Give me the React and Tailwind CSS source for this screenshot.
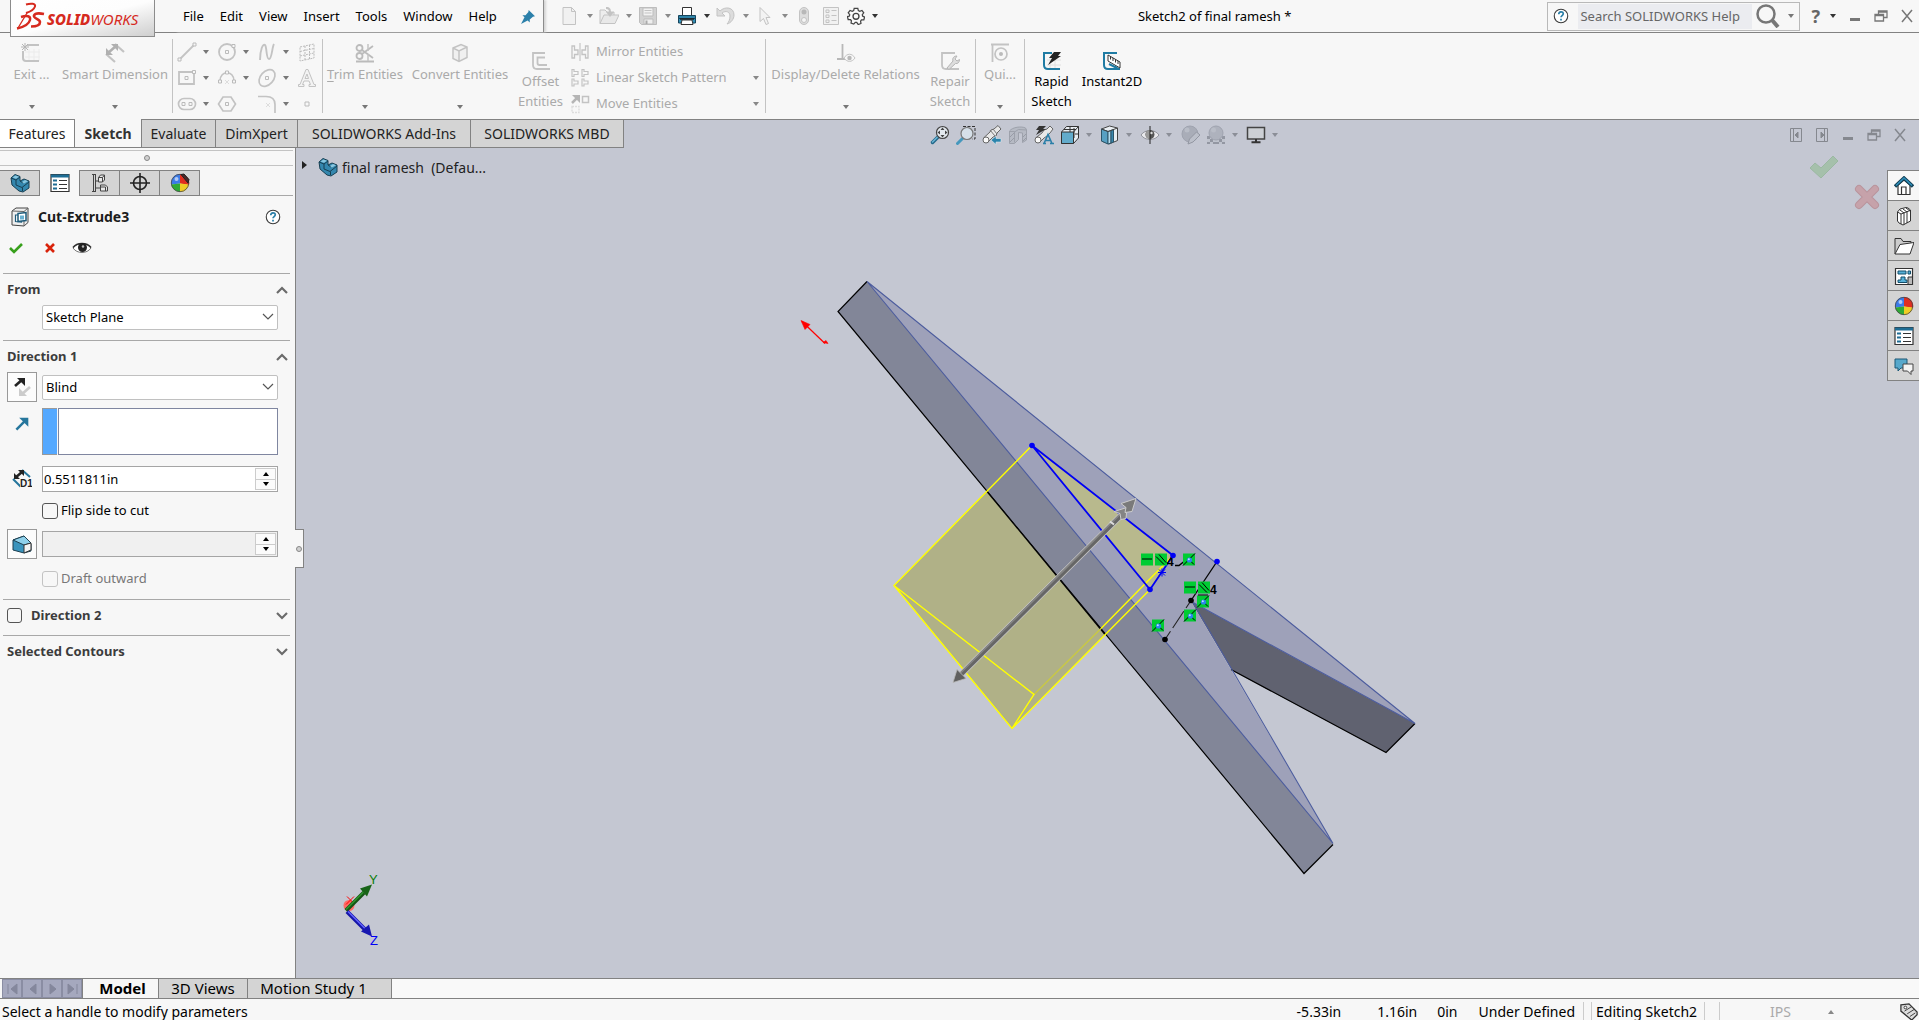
import { useState } from 'react';

const Icon = ({ size = 20, children, className = '' }) => (
  <svg width={size} height={size} viewBox="0 0 20 20" fill="none" className={`shrink-0 ${className}`} aria-hidden="true">
    {children}
  </svg>
);

const Caret = ({ className = 'text-[#777]' }) => (
  <svg width="6" height="4" viewBox="0 0 6 4" className={`shrink-0 ${className}`} aria-hidden="true">
    <path d="M0 0h6L3 4z" fill="currentColor" />
  </svg>
);

const Chevron = ({ up, thin }) => (
  <svg width="12" height="8" viewBox="0 0 12 8" fill="none" className="shrink-0" aria-hidden="true">
    <path d={up ? 'M1 7l5-5 5 5' : 'M1 1l5 5 5-5'} stroke={thin ? '#555' : '#6b6b6b'} strokeWidth={thin ? 1.2 : 2.2} />
  </svg>
);

const G = '#c3c3c3';

/* Title bar icons */
const NewIcon = () => (
  <Icon><path d="M3 1.500h8.500l4 4v13H3z" fill="#f1f1f1" stroke={G} /><path d="M11.500 1.500v4h4" stroke={G} /></Icon>
);
const OpenIcon = () => (
  <Icon>
    <path d="M1 17.500V4h5l2 2h7v3" fill="#ededed" stroke={G} />
    <path d="M1 17.500L5 9h15l-4 8.500z" fill="#e8e8e8" stroke={G} />
    <path d="M7 1c4 0 5 2 5 5h3l-4 5-4-5h3c0-2-1-3-3-3z" fill={G} />
  </Icon>
);
const SaveIcon = () => (
  <Icon>
    <path d="M1.500 1.500h17v17h-15l-2-2z" fill="#d2d2d2" stroke="#bdbdbd" />
    <path d="M5 2h10v8H5z" fill="#f2f2f2" stroke="#bdbdbd" /><path d="M6.500 4.500h7M6.500 7h7" stroke={G} />
    <path d="M6 13h9v5H6z" fill="#eee" stroke="#bdbdbd" /><path d="M7.500 14.500h2V18h-2z" fill="#aaa" />
  </Icon>
);
const PrintIcon = () => (
  <Icon>
    <path d="M5.500 9V1.500h9V9" fill="#fff" stroke="#333" />
    <path d="M1.500 9.500h17V14h-17z" fill="#2e83a8" stroke="#17455c" />
    <path d="M1.500 12.500h17V17h-17z" fill="#3391b8" stroke="#17455c" />
    <path d="M3 13h14" stroke="#222" strokeWidth="1.500" />
    <path d="M5 14h10l1 4.500H4z" fill="#fff" stroke="#333" />
  </Icon>
);
const UndoIcon = () => (
  <Icon>
    <path d="M1 2v8h8l-3-3c4-3 8-1 8 3 0 3-1 6-3 8 4-1 7-5 7-9 0-8-9-9-14-4z" fill="#dcdcdc" stroke={G} />
  </Icon>
);
const CursorIcon = () => (
  <Icon><path d="M5 1.500v14l3.500-3 2.500 6 2.500-1-2.500-6h4z" fill="#f3f3f3" stroke={G} /></Icon>
);
const LightIcon = () => (
  <Icon>
    <rect x="5.500" y="1.500" width="9" height="17" rx="4.500" fill="#ddd" stroke={G} />
    <circle cx="10" cy="6" r="2.500" fill="#b8b8b8" /><circle cx="10" cy="14" r="2.500" fill="#f5f5f5" stroke={G} />
  </Icon>
);
const FormIcon = () => (
  <Icon>
    <path d="M2.500 1.500h15v17h-15z" fill="#f1f1f1" stroke={G} />
    <path d="M5 4h3v2.500H5zM5 9h3v2.500H5zM5 14h3v2.500H5z" stroke={G} />
    <path d="M10.500 4.500h5M10.500 9.500h5M10.500 14.500h5" stroke={G} />
  </Icon>
);
const GearIcon = () => (
  <Icon size={18}>
    <path d="M8 1.500h4l.6 2.500 1.600.8 2.400-1 2 2.700-1.600 2 .3 1.500 2.200 1.200-.8 3.200-2.600 0-1 1.400.4 2.500-3 1.200L10.800 17H9.200l-1.700 2-3-1.200.4-2.500-1-1.400-2.600 0-.8-3.200L2.700 10 3 8.500l-1.600-2 2-2.700 2.400 1L7.400 4z" fill="#fafafa" stroke="#444" strokeWidth="1.400" />
    <circle cx="10" cy="10.300" r="3.300" stroke="#444" strokeWidth="1.500" />
  </Icon>
);
const PinIcon = () => (
  <Icon size={14}>
    <path d="M11 0l9 9-3 .5-4.500 4 0 4.500-3-3L0 20l5-9.500-3-3h4.500l4-4.500z" fill="#2c80aa" />
  </Icon>
);
const HelpIcon = () => (
  <Icon size={18}>
    <circle cx="10" cy="10" r="7.500" fill="#fff" stroke="#3a3a3a" strokeWidth="1.200" />
    <path d="M7.500 8c0-3.500 5-3.500 5-.5 0 2-2.500 2-2.500 4M10 13v2" stroke="#2b7fa8" strokeWidth="1.900" />
  </Icon>
);

/* Ribbon icons */
const ExitIcon = () => (
  <Icon>
    <path d="M8 6v12M13 6v12M18 6v12M4 9h15M4 14h15" stroke="#ebebeb" />
    <path d="M6 2h12M2 8v7c0 2 1 3 3 3h13" stroke={G} strokeWidth="2" />
    <path d="M4 0v8M0 4h8M1 1l6 6M7 1L1 7" stroke="#b5b5b5" />
  </Icon>
);
const DimIcon = () => (
  <Icon>
    <path d="M10 1l9 8M1 11l9 8" stroke={G} strokeWidth="2.200" />
    <path d="M3 10l8-7" stroke="#b0b0b0" strokeWidth="2.500" /><path d="M1 5v7h7zM6 1h7v7z" fill="#b0b0b0" />
  </Icon>
);
const LineIcon = () => (
  <Icon><path d="M3 17L17 3" stroke={G} strokeWidth="1.800" /><path d="M1 16h3v3H1zM16 1h3v3h-3z" fill="#f7f7f7" stroke="#bbb" /></Icon>
);
const CircleIcon = () => (
  <Icon>
    <circle cx="10" cy="10" r="8" stroke={G} strokeWidth="1.800" />
    <path d="M8.500 8.500h3v3h-3zM15 2.500h3v3h-3z" fill="#f7f7f7" stroke="#bbb" />
  </Icon>
);
const SplineIcon = () => (
  <Icon><path d="M3 18C3 8 6 1 8 3s1 14 4 14 3-12 5-15" stroke={G} strokeWidth="1.900" /></Icon>
);
const PlaneIcon = () => (
  <Icon>
    <path d="M3 5l14-3v14L3 19zM8 4v14M12.500 3v14M3 9.500l14-3M3 14l14-3" stroke="#bbb" strokeDasharray="2 1" />
  </Icon>
);
const RectIcon = () => (
  <Icon>
    <path d="M2 4h15v12H2z" stroke={G} strokeWidth="1.800" />
    <path d="M8 8.500h3v3H8zM15.500 2.500h3v3h-3z" fill="#f7f7f7" stroke="#bbb" />
  </Icon>
);
const ArcIcon = () => (
  <Icon>
    <path d="M3 13c0-11 14-11 14 0" stroke={G} strokeWidth="1.600" />
    <path d="M1.500 12h3v3h-3zM15.500 12h3v3h-3zM8.500 3h3v3h-3z" fill="#f7f7f7" stroke="#bbb" />
    <path d="M8 12l4 4M12 12l-4 4" stroke="#ddd" />
  </Icon>
);
const EllipseIcon = () => (
  <Icon>
    <ellipse cx="10" cy="10" rx="9.500" ry="6.500" transform="rotate(-48 10 10)" stroke={G} strokeWidth="1.700" />
    <path d="M8.500 8.500h3v3h-3z" stroke="#bbb" />
  </Icon>
);
const LetterIcon = () => (
  <Icon>
    <path d="M1.500 18.500v-2h1.500L9 1.500h2l6 15h1.500v2H12v-2h1.500L12 13H7l-1.500 3.500H7v2zM8 10.500h3.500L10 6z" fill="#f3f3f3" stroke={G} />
  </Icon>
);
const SlotIcon = () => (
  <Icon>
    <rect x="1.500" y="4.500" width="17" height="11" rx="5.500" stroke={G} strokeWidth="1.700" />
    <path d="M5 8.500h3v3H5zM12 8.500h3v3h-3z" stroke="#bbb" />
  </Icon>
);
const PolygonIcon = () => (
  <Icon><path d="M6 3h8l4.500 7-4.500 7H6l-4.500-7z" stroke={G} strokeWidth="1.700" /><path d="M8.500 8.500h3v3h-3z" stroke="#bbb" /></Icon>
);
const FilletIcon = () => (
  <Icon><path d="M1 2.500h8c6 0 9 3 9 8V19" stroke={G} strokeWidth="1.700" /><path d="M9 9l4 4M13 9l-4 4" stroke="#ddd" /></Icon>
);
const PointIcon = () => (<Icon><path d="M8 8h4v4H8z" stroke="#bbb" /></Icon>);
const TrimIcon = () => (
  <Icon>
    <circle cx="4.500" cy="5" r="3" stroke="#bbb" strokeWidth="1.800" /><circle cx="4.500" cy="13" r="3" stroke="#bbb" strokeWidth="1.800" />
    <path d="M7 7l11 8M7 11l11-8M1 18.500h18" stroke="#bbb" strokeWidth="1.800" />
    <path d="M13 1v7M13 11v7" stroke={G} strokeWidth="1.500" />
  </Icon>
);
const CubeIcon = () => (
  <Icon>
    <path d="M3 5l8-3.500 6 2.500v10.500L9 18.500l-6-3zM3 5l6 3 8-4M9 8v10.500" fill="#f0f0f0" stroke={G} strokeWidth="1.500" />
  </Icon>
);
const OffsetIcon = () => (
  <Icon><path d="M14 2H2v12c0 3 2 4 4 4h13M14 6.500H6.500V12c0 1 .5 2 2 2H16" stroke={G} strokeWidth="1.800" /></Icon>
);
const MirrorIcon = () => (
  <Icon>
    <path d="M10 1v18" stroke="#bbb" />
    <path d="M2 4h2.500v4H8v4.500H4.500V16H2zM18 4h-2.500v4H12v4.500h3.500V16H18z" stroke={G} strokeWidth="1.300" />
  </Icon>
);
const PatternIcon = () => (
  <Icon>
    <path d="M2 1.500h2v2h4v3H4v2H2zM12 1.500h2v2h4v3h-4v2h-2zM2 11h2v2h4v3H4v2H2zM12 11h2v2h4v3h-4v2h-2z" stroke={G} strokeWidth="1.200" />
  </Icon>
);
const MoveIcon = () => (
  <Icon>
    <path d="M2 9l6-6" stroke="#b5b5b5" strokeWidth="2.500" /><path d="M2 1h8v8z" fill="#b5b5b5" />
    <path d="M12.500 2.500h6v6h-6z" stroke={G} strokeWidth="1.500" />
    <path d="M2 12.500h7v6H2z" stroke="#ddd" strokeDasharray="2 1" strokeWidth="1.400" />
  </Icon>
);
const RelationsIcon = () => (
  <Icon>
    <path d="M6.500 1v15M1 16h11" stroke="#b8b8b8" strokeWidth="1.800" />
    <path d="M8 15c3-5 8-5 11 0-3 4.500-8 4.500-11 0z" fill="#f7f7f7" stroke={G} /><circle cx="13.500" cy="15" r="2.200" fill="#b8b8b8" />
  </Icon>
);
const RepairIcon = () => (
  <Icon>
    <path d="M15 2H2v12c0 3 2 4 4 4h13" stroke={G} strokeWidth="1.800" />
    <path d="M7 17l6-7c-1-3 1-5 4-5l-2 3 2 2 2.500-1.500c0 3-2 4.500-4 4L9 18.500z" fill="#ddd" stroke="#b5b5b5" />
  </Icon>
);
const SnapIcon = () => (
  <Icon><path d="M1 1.500h18M2.500 1v18" stroke={G} strokeWidth="1.800" /><circle cx="11" cy="11" r="6" stroke={G} strokeWidth="1.700" /><circle cx="11" cy="11" r="2" fill="#bbb" /></Icon>
);
const RapidIcon = () => (
  <Icon>
    <path d="M8 7v12M13 7v12M5 9h14M5 14h14" stroke="#e0e0e0" />
    <path d="M10 2H2v12c0 3 2 4 4 4h12" stroke="#1f7ba3" strokeWidth="2" />
    <path d="M12 1h7l-3 4h3L6 14l4-7H7z" fill="#222" />
  </Icon>
);
const InstantIcon = () => (
  <Icon>
    <path d="M15 2H2v12c0 3 2 4 4 4h12" stroke="#1f7ba3" strokeWidth="2" />
    <path d="M6 4l12 7v6L6 10z" fill="#fff" stroke="#333" /><path d="M8.500 5.500v3M11 7v3M13.500 8.500v3M16 10v3" stroke="#333" />
    <path d="M7 13l8 4" stroke="#1f7ba3" strokeWidth="2" /><path d="M13 14.500l5 3.500-5.500 1z" fill="#1f7ba3" />
  </Icon>
);

/* Heads-up view icons */
const ZoomFitIcon = () => (
  <Icon>
    <path d="M2.500 17.500l6-6" stroke="#23688a" strokeWidth="3.500" strokeLinecap="round" />
    <path d="M2.500 17l6-6" stroke="#6db7d6" strokeWidth="1.500" strokeLinecap="round" />
    <circle cx="12.500" cy="7.500" r="6" fill="#e3e9ef" stroke="#444" strokeWidth="1.200" />
    <path d="M12.500 2.500l2 2.500h-4zM12.500 12.500l2-2.500h-4zM7.500 7.500l2.500-2v4zM17.500 7.500l-2.500-2v4z" fill="#444" />
  </Icon>
);
const ZoomAreaIcon = () => (
  <Icon>
    <path d="M7 1.500h12V14h-3" stroke="#333" strokeDasharray="3 1.500" />
    <path d="M1.500 18.500l6-6" stroke="#4598bd" strokeWidth="3" strokeLinecap="round" />
    <circle cx="11" cy="8.500" r="6" fill="#d5dfe8" stroke="#777" strokeWidth="1.200" />
  </Icon>
);
const PrevViewIcon = () => (
  <Icon>
    <path d="M1.500 13L8 7l1-2 3-1 4-3.500L19 4l-4 4-1 3-3 1-6 6z" fill="#e8e8e8" stroke="#666" /><circle cx="4" cy="15" r="3" fill="#fafafa" stroke="#666" />
    <path d="M8 5l5 6M11 4l4 5" stroke="#777" />
    <path d="M9 15l5-4v2.500h5v3.500h-5v2.500z" fill="#2b84ac" stroke="#dbe7ee" strokeWidth=".6" />
  </Icon>
);
const SectionIcon = () => (
  <Icon>
    <path d="M1.500 6c3-4 12-5 16-3l1 2v10l-4 2.500V8l-4-.5v7l-4 4h-5z" fill="#b6bac4" stroke="#9da1ab" /><path d="M1.500 6.500h5v11M6.500 7l4-2.500 8 .5" stroke="#9da1ab" />
    <path d="M2 12l4-4M2 17l4-4M15 12l3-3M15 16l3-3" stroke="#989ca7" />
  </Icon>
);
const DynamicIcon = () => (
  <Icon>
    <path d="M1.500 13L8 8l2-3 3-1 3-3L19 4l-3 4-3 3-3 2-5 5z" fill="#e8e8e8" stroke="#666" /><circle cx="4" cy="15" r="3" fill="#fafafa" stroke="#666" />
    <path d="M5 1h7L9 4h3L2 10l3-5H2z" fill="#333" />
    <path d="M10 18.500l4-9 4 9M11.500 15.500h5M9 18.500h3M16 18.500h4" stroke="#2b7fa8" strokeWidth="1.600" />
  </Icon>
);
const OrientIcon = () => (
  <Icon>
    <path d="M1.500 7l5-5.500h12V13l-5 5.500h-12z" fill="#e8edf2" stroke="#333" />
    <path d="M1.500 7h12v11.500h-12z" fill="#62abcb" stroke="#333" /><path d="M13.500 7l5-5.500M10 1.500V7M14 3v10M15 9h3.500M4 4.500h12" stroke="#333" />
  </Icon>
);
const StyleIcon = () => (
  <Icon>
    <path d="M1.500 4l8-3 8 2v12.500L9 19l-7.500-3z" fill="#e9eef2" stroke="#444" />
    <path d="M1.500 4L8 6.500V19l-6.500-3z" fill="#57a0c2" stroke="#2c5468" /><path d="M8 6.500l3-1V18l-3 1z" fill="#b5dced" stroke="#2c5468" />
    <path d="M11 5.500l2.500-1V17L11 18z" fill="#3987ad" stroke="#2c5468" /><path d="M1.500 4L8 6.500 17.500 3" stroke="#444" />
  </Icon>
);
const HideShowIcon = () => (
  <Icon>
    <path d="M1 10c4-6 14-6 18 0-4 6-14 6-18 0z" fill="#e9e9ec" stroke="#92949c" /><circle cx="10" cy="9.500" r="4.500" fill="#555" />
    <path d="M10 5a4.500 4.500 0 000 9z" fill="#999" /><path d="M10 1v18" stroke="#222" /><circle cx="11.500" cy="8" r="1.200" fill="#ddd" />
  </Icon>
);
const AppearIcon = () => (
  <Icon><circle cx="10" cy="9" r="8" fill="#a9adb8" stroke="#9fa3af" /><circle cx="7" cy="5" r="2.500" fill="#b9bdc7" /><path d="M8 19l1.500-5 7-7L20 10l-7 7z" fill="#bcc0ca" stroke="#9397a2" /></Icon>
);
const SceneIcon = () => (
  <Icon>
    <path d="M1 11h18v8H1z" fill="#bfc3cd" /><path d="M1 11h3v3H1zM4 14h3v3H4zM13 14h3v3h-3zM1 17h3v2H1zM10 14h0v3M7 17h6v2H7zM16 11h3v3h-3zM16 17h3v2h-3z" fill="#9397a2" />
    <circle cx="10" cy="8" r="7" fill="#aeb2bd" stroke="#9fa3af" /><circle cx="7.500" cy="5" r="2.500" fill="#b9bdc7" />
  </Icon>
);
const MonitorIcon = () => (
  <Icon>
    <path d="M1.500 2.500h17v11.500h-17z" fill="#cdd0d5" stroke="#444" strokeWidth="1.500" /><path d="M10 14v3M5.500 17.200h9" stroke="#333" strokeWidth="2" />
  </Icon>
);

/* Panel and task icons */
const PartIcon = () => (
  <Icon>
    <path d="M1 5l4-3.500 5 2V8l4-2 5 2v7l-6 4-4-1-7-6z" fill="#3487ae" stroke="#173f52" />
    <path d="M1 5l5 2 4-3M6 7v5l6 2.500 7-5.500M12.500 14.500V18M10 8l3 2" stroke="#173f52" /><path d="M2.500 4.500l3-2 3.500 1.200-3 2zM12 9l3-2 3 1.200-4 2.300z" fill="#8ac7e0" />
  </Icon>
);
const ListIcon = () => (
  <Icon>
    <path d="M1 1.500h18v17H1z" fill="#fff" stroke="#333" strokeWidth="1.200" /><path d="M1 3h18" stroke="#1e6d94" strokeWidth="3" />
    <path d="M3 7.500h4M3 11.500h4M3 15.500h4" stroke="#1e6d94" strokeWidth="2.200" /><path d="M9 7.500h8M9 11.500h8M9 15.500h8" stroke="#333" />
  </Icon>
);
const TreeIcon = () => (
  <Icon>
    <path d="M3.500 1v18M2 1.500h4M5.500 2v16M2 18.500h4M6 8h3M6 15h5" stroke="#444" />
    <path d="M8.500 4.500l2-2.500h4v5l-2 2h-4zM8.500 4.500h4V9M12.500 4.500L14.500 2" fill="#e8e8e8" stroke="#444" />
    <path d="M10.500 12h5l2 2v4h-7zM10.500 14h5v4" fill="#e8e8e8" stroke="#444" />
  </Icon>
);
const TargetIcon = () => (
  <Icon><circle cx="10" cy="10" r="6.500" stroke="#222" strokeWidth="1.600" /><path d="M10 0v20M0 10h20" stroke="#222" strokeWidth="1.600" /></Icon>
);
const BallIcon = ({ marker }) => (
  <Icon>
    <path d="M10 10.500L1.200 11.500A9 9 0 0110 1z" fill="#3b7be8" /><path d="M10 10.500V1a9 9 0 019 11z" fill="#e02e20" />
    <path d="M10 10.500l9 1a9 9 0 01-9 7.500z" fill="#f0cd25" /><path d="M10 10.500V19a9 9 0 01-8.800-7.500z" fill="#2faa35" />
    <circle cx="10" cy="10" r="8.700" stroke="#444" strokeWidth=".8" /><circle cx="6.500" cy="6" r="2" fill="#fff" opacity=".6" />
    {marker && <path d="M11 1.500l3-.5 5 5.500-1 3.500z" fill="#4a2a2a" stroke="#222" />}
  </Icon>
);
const CutIcon = () => (
  <Icon>
    <path d="M2 4l4-3h12v14.500L14 19l-12-1z" fill="#efefef" stroke="#444" /><path d="M2 4l12 .5V19M14 4.500L18 1" stroke="#666" />
    <path d="M5.500 8h6v7l-6-.5z" fill="#fff" stroke="#1e5b7a" strokeWidth="1.200" /><path d="M8 6.500l8-1v8l-8 1z" fill="#fff" stroke="#1e5b7a" strokeWidth="1.500" /><path d="M10 8.500h4v4h-4z" fill="#68b1d2" />
  </Icon>
);
const EyeIcon = () => (
  <Icon>
    <path d="M1 10C5 4 15 4 19 10c-4 6-14 6-18 0z" fill="#fff" stroke="#777" /><path d="M1 9.500C5 4 15 4 19 9.500" stroke="#333" strokeWidth="1.500" />
    <circle cx="10.500" cy="9.500" r="4.500" fill="#222" /><circle cx="11" cy="8.500" r="1.200" fill="#bbb" />
  </Icon>
);
const ReverseIcon = () => (
  <Icon>
    <path d="M3 9l8-7" stroke="#222" strokeWidth="2.600" /><path d="M5 1h8v8z" fill="#222" />
    <path d="M18 10l-9 8" stroke="#ccc" strokeWidth="2.600" /><path d="M7 11v8h8z" fill="#ccc" />
  </Icon>
);
const DirIcon = () => (
  <Icon size={14}><path d="M2 18L14 6" stroke="#26769c" strokeWidth="3.500" /><path d="M6 1h13v13z" fill="#26769c" /></Icon>
);
const DepthIcon = () => (
  <Icon>
    <path d="M10 1l8 7M1 10l8 8" stroke="#26769c" strokeWidth="2" /><path d="M3 9l7-6" stroke="#222" strokeWidth="2.500" /><path d="M2 4v6h6zM6 1h6v6z" fill="#222" />
    <path d="M8 9h12v11H8z" fill="#f7f7f7" />
    <text x="8" y="18" fontSize="10" fontWeight="700" fill="#222" fontFamily="Liberation Sans, sans-serif">D1</text>
  </Icon>
);
const DraftIcon = () => (
  <Icon>
    <path d="M1 6l11-4 7 8v7l-7 2-11-3z" fill="#3a94bd" stroke="#1d3f50" /><path d="M1 6l11-4 7 7-7 2z" fill="#8fd0ea" stroke="#1d3f50" />
    <path d="M12 11l7-2v7l-7 3z" fill="#f3f3f3" stroke="#333" />
  </Icon>
);
const HomeIcon = () => (
  <Icon>
    <path d="M4 9v9.500h12V9l-6-5z" fill="#fff" stroke="#333" strokeWidth="1.200" /><path d="M7.500 18V11h4.500v7" stroke="#333" strokeWidth="1.200" />
    <path d="M1 10.500L10 2l9 8.500" stroke="#123f55" strokeWidth="3.400" /><path d="M2 9.500L10 2l8 7.500" stroke="#2f8fba" strokeWidth="1.600" />
  </Icon>
);
const BooksIcon = () => (
  <Icon>
    <path d="M3.500 6L6 3l2-.5L10 2l2-.5 2 .5 2.500 2v11L9 19l-4-2-1.500-2z" fill="#fff" stroke="#333" />
    <path d="M3.500 6L7 8v10M6 4l4 3v11.500M9 3l4 3v11M12 2l4 3M7 8l9-3.500" stroke="#333" />
  </Icon>
);
const FolderIcon = () => (
  <Icon><path d="M1 18V2.500h6l2 3h8V9" fill="#ccc" stroke="#333" /><path d="M1 18L6 8.500l14-2-4 11.500z" fill="#fff" stroke="#333" /></Icon>
);
const PaletteIcon = () => (
  <Icon>
    <path d="M1.500 2.500h17v16h-17z" fill="#fff" stroke="#333" strokeWidth="1.200" />
    <path d="M4 5h8v3H4zM14 5h2.500v3H14zM7 11h4v3h2v2.500H4V14h3z" fill="#57b1d8" stroke="#134e6a" /><path d="M14 11h4.500v7.500H14z" fill="#bbb" stroke="#333" />
  </Icon>
);
const ForumIcon = () => (
  <Icon>
    <path d="M1 3h12v9H7l-3 3v-3H1z" fill="#57a8cb" stroke="#1c5877" /><path d="M9 8h10v7h-2v3.500L13.500 15H9z" fill="#f4f4f4" stroke="#444" />
  </Icon>
);
const TagIcon = () => (
  <Icon size={18}><path d="M1 2l9-1 9 9v3l-6 6L1 9z" fill="#ddd" stroke="#333" strokeWidth="1.400" /><circle cx="6" cy="5" r="1.500" fill="#fff" stroke="#333" /><path d="M5 9l8-5M8 12l8-5M11 15l6-4" stroke="#333" /></Icon>
);

const WindowButtons = ({ className }) => (
  <div className={`flex items-center ${className}`}>
    <button aria-label="Minimize">
      <svg width="14" height="14" viewBox="0 0 14 14"><path d="M2 9h10v3H2z" fill="currentColor" /></svg>
    </button>
    <button aria-label="Restore">
      <svg width="14" height="14" viewBox="0 0 14 14" fill="none" stroke="currentColor" strokeWidth="1.300">
        <path d="M1 5.500h8.500V12H1zM4.500 5V2H13v6.500H10M1 6.500h8M4.500 3H13" />
      </svg>
    </button>
    <button aria-label="Close">
      <svg width="14" height="14" viewBox="0 0 14 14" fill="none" stroke="currentColor" strokeWidth="1.500"><path d="M2 1l10 12M12 1L2 13" /></svg>
    </button>
  </div>
);

const TitleBar = () => {
  const menus = ['File', 'Edit', 'View', 'Insert', 'Tools', 'Window', 'Help'];
  const tools = [
    { name: 'New', icon: <NewIcon />, caret: true },
    { name: 'Open', icon: <OpenIcon />, caret: true },
    { name: 'Save', icon: <SaveIcon />, caret: true },
    { name: 'Print', icon: <PrintIcon />, caret: true, dark: true },
    { name: 'Undo', icon: <UndoIcon />, caret: true },
    { name: 'Select', icon: <CursorIcon />, caret: true },
  ];

  return (
    <header className="flex h-[33px] shrink-0 items-center border-b border-[#828282] bg-[#f7f7f7]">
      {/* Logo hangs a little below the bar */}
      <div className="z-10 ml-[10px] flex h-[37px] w-[145px] shrink-0 items-center self-start border border-t-0 border-[#8c8c8c] bg-linear-to-br from-white via-[#fdfdfd] to-[#cfcfcf] pt-[3px] pl-1">
        <svg width="30" height="30" viewBox="0 0 30 30" fill="none" stroke="#d62a1e" className="-mt-2 shrink-0" aria-hidden="true">
          <path d="M11 3.500c5-1.500 10-1 9 2-1 3-4 5-9 6.500" strokeWidth="2" />
          <path d="M12 12L3 27" strokeWidth="1.300" />
          <path d="M6 16c6-2 10-1 9 3-1 4-6 7-13 8.500" strokeWidth="2.400" />
          <path d="M29 13c-5-1-9-1-10 1.500-1 3 6 3.500 6 6.500 0 3-4 4.500-9 4.500" strokeWidth="2.600" />
        </svg>
        <span className="pl-[2px] text-[15px] italic text-[#d62a1e]"><b className="font-extrabold">SOLID</b>WORKS</span>
      </div>

      <nav className="ml-[20px] flex h-full w-[369px] shrink-0 items-center border-r border-[#8c8c8c] pt-[2px] shadow-[2px_0_2px_#d5d5d5]">
        {menus.map((menu) => (
          <button key={menu} className="px-2">{menu}</button>
        ))}
        <button aria-label="Pin menu" className="ml-[16px]"><PinIcon /></button>
      </nav>

      <div className="ml-[16px] flex items-center">
        {tools.map((tool) => (
          <button key={tool.name} aria-label={tool.name} className="flex w-[39px] items-center gap-[7px]">
            {tool.icon}
            <Caret className={tool.dark ? 'text-[#333]' : 'text-[#8a8a8a]'} />
          </button>
        ))}
        <button aria-label="Rebuild" className="w-[24px]"><LightIcon /></button>
        <button aria-label="File properties" className="w-[29px] pl-[3px]"><FormIcon /></button>
        <button aria-label="Options" className="flex items-center gap-[7px]"><GearIcon /><Caret className="text-[#333]" /></button>
      </div>

      <h1 className="ml-auto whitespace-nowrap pt-[2px]">Sketch2 of final ramesh *</h1>

      <div className="ml-[256px] flex h-[29px] w-[253px] items-center border border-[#b9b9b9] pl-1">
        <HelpIcon />
        <input aria-label="Search help" placeholder="Search SOLIDWORKS Help" className="ml-2 h-[25px] w-[174px] bg-[#ebecf0] pl-[2px] text-[13px] placeholder:text-[#666] outline-none" />
        <button aria-label="Search" className="ml-1 flex items-center gap-2">
          <svg width="24" height="24" viewBox="0 0 24 24" fill="none" stroke="#777">
            <circle cx="10" cy="10" r="8.500" strokeWidth="2.500" /><path d="M16 16l6 7" strokeWidth="4" />
          </svg>
          <Caret />
        </button>
      </div>
      <button aria-label="Help" className="ml-[11px] flex items-center gap-[10px] text-[18px] font-bold text-[#666]">
        <span>?</span><Caret className="text-[#333]" />
      </button>
      <WindowButtons className="ml-[12px] mr-[5px] gap-[12px] text-[#777]" />
    </header>
  );
};

const BigTool = ({ icon, label, caret, className }) => (
  <button className={`flex h-full shrink-0 flex-col items-center justify-between pt-[10px] pb-[10px] leading-[22px] text-[#aaa] ${className}`}>
    <span className="flex flex-col items-center whitespace-nowrap">{icon}{label}</span>
    {caret && <Caret />}
  </button>
);

const TallTool = ({ icon, lines, className }) => (
  <button className={`flex h-full shrink-0 flex-col items-center pt-[18px] leading-[20px] ${className}`}>
    {icon}
    {lines.map((line) => <span key={line}>{line}</span>)}
  </button>
);

const Divider = () => <div className="my-[6px] w-px shrink-0 bg-[#c3c3c3]" />;

const Ribbon = () => {
  const sketchTools = [
    ['Line', <LineIcon />, true], ['Circle', <CircleIcon />, true], ['Spline', <SplineIcon />, true], ['Plane', <PlaneIcon />],
    ['Rectangle', <RectIcon />, true], ['Arc', <ArcIcon />, true], ['Ellipse', <EllipseIcon />, true], ['Text', <LetterIcon />],
    ['Slot', <SlotIcon />, true], ['Polygon', <PolygonIcon />], ['Fillet', <FilletIcon />, true], ['Point', <PointIcon />],
  ];

  return (
    <div className="flex h-[86px] shrink-0 bg-[#f7f7f7] pl-[5px]">
      <BigTool icon={<ExitIcon />} label="Exit ..." caret className="w-[53px]" />
      <BigTool icon={<DimIcon />} label="Smart Dimension" caret className="w-[114px]" />
      <Divider />
      <div className="mt-[6px] grid w-[149px] shrink-0 grid-cols-[40px_40px_40px_24px] grid-rows-[26px_26px_26px] pl-1">
        {sketchTools.map(([name, icon, caret]) => (
          <button key={name} aria-label={name} className="flex items-center gap-[6px]">{icon}{caret && <Caret />}</button>
        ))}
      </div>
      <Divider />
      <BigTool icon={<TrimIcon />} label={<span><u className="underline-offset-2">T</u>rim Entities</span>} caret className="w-[84px]" />
      <BigTool icon={<CubeIcon />} label="Convert Entities" caret className="w-[106px]" />
      <TallTool icon={<OffsetIcon />} lines={['Offset', 'Entities']} className="w-[55px] text-[#aaa]" />
      <div className="mt-[6px] flex w-[197px] shrink-0 flex-col pl-[2px] pr-[6px] text-[#aaa]">
        <button className="flex h-[26px] items-center gap-[6px]"><MirrorIcon />Mirror Entities</button>
        <button className="flex h-[26px] items-center gap-[6px]"><PatternIcon />Linear Sketch Pattern<Caret className="ml-auto text-[#888]" /></button>
        <button className="flex h-[26px] items-center gap-[6px]"><MoveIcon />Move Entities<Caret className="ml-auto text-[#888]" /></button>
      </div>
      <Divider />
      <BigTool icon={<RelationsIcon />} label="Display/Delete Relations" caret className="w-[159px]" />
      <TallTool icon={<RepairIcon />} lines={['Repair', 'Sketch']} className="w-[50px] text-[#aaa]" />
      <Divider />
      <BigTool icon={<SnapIcon />} label="Qui..." caret className="w-[48px]" />
      <Divider />
      <TallTool icon={<RapidIcon />} lines={['Rapid', 'Sketch']} className="w-[53px]" />
      <TallTool icon={<InstantIcon />} lines={['Instant2D']} className="w-[68px]" />
    </div>
  );
};

const CommandTabs = () => {
  const rest = [
    { name: 'Evaluate', width: 'w-[75px]' },
    { name: 'DimXpert', width: 'w-[82px]' },
    { name: 'SOLIDWORKS Add-Ins', width: 'w-[173px]' },
    { name: 'SOLIDWORKS MBD', width: 'w-[153px]' },
  ];
  const views = [
    ['Zoom to fit', <ZoomFitIcon />], ['Zoom to area', <ZoomAreaIcon />], ['Previous view', <PrevViewIcon />],
    ['Section view', <SectionIcon />], ['Dynamic annotation', <DynamicIcon />], ['View orientation', <OrientIcon />, true],
    ['Display style', <StyleIcon />, true], ['Hide or show', <HideShowIcon />, true], ['Edit appearance', <AppearIcon />],
    ['Apply scene', <SceneIcon />, true], ['View settings', <MonitorIcon />, true],
  ];

  return (
    <div className="flex h-[29px] shrink-0 bg-[#c4c7d2]">
      <div className="flex shrink-0 border-b border-[#828282] text-[14px] text-[#222]">
        <button className="w-[75px] border-t border-r border-[#828282] bg-white">Features</button>
        <button className="w-[66px] bg-[#f7f7f7] font-bold text-[#333]">Sketch</button>
        {rest.map((tab, i) => (
          <button key={tab.name} className={`border-t border-r border-[#828282] bg-[#d4d4d4] ${tab.width} ${i === 0 ? 'border-l' : ''}`}>{tab.name}</button>
        ))}
      </div>
      <div className="flex min-w-0 flex-1 items-center border-t border-[#828282] pt-[2px]">
        <div className="ml-[306px] flex items-center gap-[6px]">
          {views.map(([name, icon, caret]) => (
            <button key={name} aria-label={name} className={caret ? 'flex w-[34px] items-center gap-[6px]' : ''}>
              {icon}{caret && <Caret className="text-[#8b8e97]" />}
            </button>
          ))}
        </div>
        <div className="ml-auto mr-[12px] flex items-center gap-[12px] text-[#85888f]">
          <button aria-label="Dock left">
            <svg width="14" height="14" viewBox="0 0 14 14" fill="none" stroke="currentColor"><path d="M1.500.5h11v13h-11zM4.500 1v12" /><path d="M9 4v6L6 7z" fill="currentColor" /></svg>
          </button>
          <button aria-label="Dock right">
            <svg width="14" height="14" viewBox="0 0 14 14" fill="none" stroke="currentColor"><path d="M1.500.5h11v13h-11zM9.500 1v12" /><path d="M6 4v6l3-3z" fill="currentColor" /></svg>
          </button>
          <WindowButtons className="gap-[12px]" />
        </div>
      </div>
    </div>
  );
};

const Section = ({ title, open, check, children }) => (
  <section className="ml-[3px] mr-[5px] border-t border-[#a8a8a8]">
    <div className="flex h-[31px] items-center pl-1 pr-[2px] font-bold text-[#3c3c3c]">
      {check ? (
        <label className="flex items-center gap-[9px]">
          <input type="checkbox" className="size-[15px] appearance-none rounded-[3px] border border-[#555] bg-[#f7f7f7]" />
          {title}
        </label>
      ) : (
        <h3>{title}</h3>
      )}
      <button aria-label={`Toggle ${title}`} className="ml-auto"><Chevron up={open} /></button>
    </div>
    {children}
  </section>
);

const Field = ({ icon, boxed, children }) => (
  <div className="flex items-center gap-[5px] pl-1 pr-[12px]">
    {boxed ? (
      <button aria-label="Option" className="flex size-[30px] shrink-0 items-center justify-center border border-[#999] bg-[#fcfcfc]">{icon}</button>
    ) : (
      <span className="flex w-[30px] shrink-0 justify-center">{icon}</span>
    )}
    {children}
  </div>
);

const Select = ({ label, value }) => (
  <div className="relative flex-1">
    <select aria-label={label} className="block h-[25px] w-full appearance-none rounded-[2px] border border-[#c0c0c0] bg-white pt-px pl-[3px] text-[13px] text-black">
      <option>{value}</option>
    </select>
    <span className="pointer-events-none absolute top-[8px] right-[4px]"><Chevron thin /></span>
  </div>
);

const Spinner = ({ label, value, onChange, disabled }) => (
  <div className={`flex h-[26px] flex-1 border border-[#a5a5a5] ${disabled ? 'bg-[#f0f0f0]' : 'bg-white'}`}>
    <input aria-label={label} value={value} onChange={onChange} disabled={disabled} className="min-w-0 flex-1 pt-px pl-px text-[13px] text-black outline-none" />
    <div className="my-px mr-px flex w-[21px] flex-col">
      <button aria-label={`Increase ${label}`} className="flex flex-1 items-center justify-center border border-[#ccc] bg-[#fbfbfb]"><Caret className="rotate-180 text-black" /></button>
      <button aria-label={`Decrease ${label}`} className="flex flex-1 items-center justify-center border border-t-0 border-[#ccc] bg-[#fbfbfb]"><Caret className="text-black" /></button>
    </div>
  </div>
);

const PropertyPanel = () => {
  const [depth, setDepth] = useState('0.5511811in');
  const tabs = [
    ['Feature tree', <PartIcon />], ['Properties', <ListIcon />], ['Configurations', <TreeIcon />],
    ['Dimensions', <TargetIcon />], ['Display', <BallIcon marker />],
  ];

  return (
    <aside className="relative flex w-[296px] shrink-0 flex-col border-r border-[#828282] bg-[#f7f7f7] pt-[2px] text-[13px]">
      <div className="mr-[2px] flex h-[16px] items-center justify-center border-y border-[#c3c3c3]">
        <span className="size-[6px] rounded-full border border-[#888] bg-[#d0d0d0]" />
      </div>
      <div className="mt-1 flex h-[26px]">
        {tabs.map(([name, icon], i) => (
          <button
            key={name}
            aria-label={name}
            className={`flex w-[40px] items-center justify-center border-r ${i === 1 ? 'border-[#828282] bg-[#f7f7f7]' : 'border-y border-[#828282] bg-[#d4d4d4]'}`}
          >
            {icon}
          </button>
        ))}
        <div className="mr-[2px] flex-1 border-b border-[#a8a8a8]" />
      </div>

      <div className="flex h-[41px] items-center pl-[10px] pr-[13px]">
        <CutIcon />
        <h2 className="ml-2 text-[14px] font-bold text-[#1c1c1c]">Cut-Extrude3</h2>
        <button aria-label="Help" className="ml-auto"><HelpIcon /></button>
      </div>
      <div className="mb-[14px] flex h-[22px] items-center pl-[9px]">
        <button aria-label="OK">
          <svg width="14" height="14" viewBox="0 0 14 14" fill="none"><path d="M1 7l4 4 8-8" stroke="#38a01c" strokeWidth="2.600" /></svg>
        </button>
        <button aria-label="Cancel" className="ml-[20px]">
          <svg width="14" height="14" viewBox="0 0 14 14" fill="none"><path d="M3 3l8 8M11 3l-8 8" stroke="#d9230b" strokeWidth="2.600" /></svg>
        </button>
        <button aria-label="Preview" className="ml-[15px]"><EyeIcon /></button>
      </div>

      <Section title="From" open>
        <div className="pb-[10px]"><Field><Select label="Start condition" value="Sketch Plane" /></Field></div>
      </Section>

      <Section title="Direction 1" open>
        <Field boxed icon={<ReverseIcon />}><Select label="End condition" value="Blind" /></Field>
        <div className="mt-[6px]">
          <Field icon={<span className="mb-4"><DirIcon /></span>}>
            <div className="flex h-[47px] flex-1 gap-px">
              <div className="w-[15px] border border-[#999] border-r-0 bg-[#54a8ff]" />
              <textarea aria-label="Direction of extrusion" className="block min-w-0 flex-1 resize-none border border-[#7f86a0] bg-white outline-none" />
            </div>
          </Field>
        </div>
        <div className="mt-[11px]">
          <Field icon={<DepthIcon />}><Spinner label="Depth" value={depth} onChange={(e) => setDepth(e.target.value)} /></Field>
        </div>
        <label className="mt-[11px] ml-[39px] flex h-[16px] items-center gap-[3px] text-black">
          <input type="checkbox" className="size-[16px] appearance-none rounded-[3px] border border-[#555] bg-[#f7f7f7]" />
          Flip side to cut
        </label>
        <div className="mt-[10px]">
          <Field boxed icon={<DraftIcon />}><Spinner label="Draft angle" value="" disabled /></Field>
        </div>
        <label className="mt-[12px] mb-[12px] ml-[39px] flex h-[16px] items-center gap-[3px] text-[#777]">
          <input type="checkbox" disabled className="size-[16px] appearance-none rounded-[3px] border border-[#c3c3c3] bg-[#f7f7f7]" />
          Draft outward
        </label>
      </Section>

      <Section title="Direction 2" check><div className="h-1" /></Section>
      <Section title="Selected Contours" />

      {/* Collapse handle on the panel edge */}
      <button aria-label="Collapse panel" className="absolute top-[381px] -right-[9px] z-10 flex h-[39px] w-[9px] items-center justify-center border border-l-0 border-[#828282] bg-[#f7f7f7]">
        <span className="size-[6px] shrink-0 rounded-full border border-[#888] bg-[#d0d0d0]" />
      </button>
    </aside>
  );
};

const Badge = ({ x, y, kind }) => (
  <g transform={`translate(${x} ${y})`}>
    <rect width="12" height="12" fill="#00cc33" />
    {kind === 'horizontal' && <path d="M1 5.500h10" stroke="#000" />}
    {kind === 'parallel' && <path d="M1 3l8 8M4 1l7 8" stroke="#000" />}
    {kind === 'coincident' && (
      <>
        <path d="M0 12L12 0M7 7l4 4" stroke="#000" />
        <circle cx="6.500" cy="6.500" r="2.600" fill="#2d83ee" />
        <circle cx="5.800" cy="5.800" r="1" fill="#bfe0ff" />
      </>
    )}
  </g>
);

const Model = () => (
  <svg className="absolute inset-0 h-full w-full" viewBox="296 147.5 1623 830" fill="none" role="img" aria-label="Part with cut preview">
    {/* Solid body */}
    <path d="M1191 601L1415 723L1386 752L1232 670z" fill="#606270" />
    <path d="M867 281L1415 723L1191 601L1333 843z" fill="#9ea1b9" />
    <path d="M867 281L1333 843L1304 873L838 311z" fill="#828698" />
    <path d="M867 281L838 311L1304 873L1333 844M1231 669L1386 752L1415 723" stroke="#000" strokeWidth="1.200" />
    <path d="M867 281L1415 723L1193 602L1333 843z" stroke="#4c5c9e" strokeWidth="1.100" />

    {/* Cut volume */}
    <path d="M987 491L894 585L1012 728L1105 634z" fill="#b0b187" />
    <path d="M987 491L1105 634" stroke="#000" strokeWidth="1.200" />
    <path d="M1032 445L1173 555L1150 589z" fill="#b8b98d" />
    <path d="M1034 694L1101 628" stroke="#c9c943" strokeWidth="1.400" />
    <path d="M1101 628L1173 555M1032 445L894 585L1012 728L1150 589M894 585L1034 694L1012 728" stroke="#ffff00" strokeWidth="1.400" />
    <path d="M1032 445L1173 555L1150 589z" stroke="#0000f5" strokeWidth="1.800" />
    <path d="M1162 568v8M1158 572h8M1159 569l6 6M1165 569l-6 6" stroke="#0000f5" />

    {/* Drag arrow */}
    <path d="M961 674L1125 511" stroke="#c4c4c4" strokeWidth="6" />
    <path d="M961 674L1125 511" stroke="#666" strokeWidth="4.500" />
    <path d="M960 673L1124 510" stroke="#858585" strokeWidth="1.500" />
    <path d="M953 682L957 669L966 678z" fill="#606060" stroke="#b9b9b9" strokeWidth=".8" />
    <path d="M1127 507L1114 511L1120 513L1121 519L1126 518z" fill="#848484" stroke="#ccc" />
    <path d="M1136 498L1121 503L1126 507L1125 512L1132 511z" fill="#7a7a7a" stroke="#ccc" />
    <path d="M1110 521l4 3" stroke="#ddd" strokeWidth="2" />

    {/* Sketch line and relations */}
    <path d="M1217 561L1191 600" stroke="#000" strokeWidth="1.300" />
    <path d="M1191 600L1165 639" stroke="#222" strokeWidth="1.100" strokeDasharray="9 4 20 4" />
    <path d="M1175 565l4 0 5-4" stroke="#000" strokeWidth="1.500" />
    <Badge x={1141} y={553} kind="horizontal" />
    <Badge x={1155} y={553} kind="parallel" />
    <Badge x={1183} y={553} kind="coincident" />
    <Badge x={1184} y={581} kind="horizontal" />
    <Badge x={1198} y={581} kind="parallel" />
    <Badge x={1197} y={595} kind="coincident" />
    <path d="M1198 594.500h10" stroke="#000" />
    <Badge x={1184} y={609} kind="coincident" />
    <Badge x={1152} y={619} kind="coincident" />
    <g fontFamily="Liberation Sans, sans-serif" fontSize="12" fontWeight="700" fill="#000">
      <text x="1167" y="565">4</text>
      <text x="1210" y="593">4</text>
    </g>
    <g fill="#0000f5">
      <circle cx="1032" cy="445" r="2.800" /><circle cx="1173" cy="555" r="2.800" />
      <circle cx="1150" cy="589" r="2.800" /><circle cx="1217" cy="561" r="2.800" />
    </g>
    <circle cx="1191" cy="600" r="2.800" fill="#000" />
    <circle cx="1165" cy="639" r="2.800" fill="#000" />

    {/* Origin marker */}
    <path d="M802 321L825 343" stroke="#f00" strokeWidth="1.200" />
    <path d="M801 320l9 4-5 5zM823 342l3-2 2 3z" fill="#f00" stroke="#f00" strokeWidth=".6" />

    {/* Axis triad */}
    <circle cx="349" cy="905" r="5.500" fill="#ff6b66" />
    <path d="M347 896l7 7M354 896l-8 8" stroke="#f00" />
    <path d="M346 910L364 892" stroke="#155415" strokeWidth="4" /><path d="M346 909L364 891" stroke="#2e9a2e" strokeWidth="1.500" />
    <path d="M372 884l-12 4 7 8z" fill="#176317" />
    <path d="M347 911L365 929" stroke="#1515a8" strokeWidth="4" /><path d="M348 911L365 928" stroke="#6464ff" strokeWidth="1.500" />
    <path d="M372 936l-11-5 8-7z" fill="#1717b0" />
    <g fontFamily="Liberation Sans, sans-serif" fontSize="13">
      <text x="369" y="883" fill="#0b7d0b">Y</text>
      <text x="370" y="944" fill="#0000f5">Z</text>
    </g>
  </svg>
);

const Viewport = () => {
  const tasks = [
    ['Home', <HomeIcon />], ['Design library', <BooksIcon />], ['File explorer', <FolderIcon />], ['View palette', <PaletteIcon />],
    ['Appearances', <BallIcon />], ['Custom properties', <ListIcon />], ['Forum', <ForumIcon />],
  ];

  return (
    <main className="relative flex min-w-0 flex-1 items-start justify-between bg-[#c4c7d2]">
      <Model />
      <button className="relative ml-[6px] mt-[9px] flex items-start text-[14px] text-[#222]">
        <svg width="5" height="8" viewBox="0 0 5 8" className="mt-1"><path d="M0 0l5 4-5 4z" fill="#222" /></svg>
        <span className="mr-1 ml-[11px]"><PartIcon /></span>
        <span className="whitespace-pre">final ramesh  (Defau...</span>
      </button>

      <div className="relative flex items-start">
        <button aria-label="Accept" className="mt-[6px]">
          <svg width="30" height="26" viewBox="0 0 30 26"><path d="M1 14l5-5 6 5L24 2l5 5-17 17z" fill="#a5c0ab" stroke="#9bb8a2" /></svg>
        </button>
        <button aria-label="Reject" className="mt-[36px] ml-[15px] mr-[7px]">
          <svg width="26" height="26" viewBox="0 0 26 26" fill="none"><path d="M5 5l16 16M21 5L5 21" stroke="#b9949c" strokeWidth="8" strokeLinecap="round" /><path d="M5 5l16 16M21 5L5 21" stroke="#c6a2aa" strokeWidth="6" strokeLinecap="round" /></svg>
        </button>
        <div className="mt-[22px] w-[32px] border-t border-l border-[#828282]">
          {tasks.map(([name, icon], i) => (
            <button key={name} aria-label={name} className={`flex h-[30px] w-full items-center justify-center border-b border-[#828282] ${i === 0 ? 'bg-[#f7f7f7]' : 'bg-[#d4d4d4]'}`}>
              {icon}
            </button>
          ))}
        </div>
      </div>
    </main>
  );
};

const BottomTabs = () => {
  const arrows = [
    ['First', 'M4 3v10M13 3v10L7 8z'], ['Previous', 'M12 3v10L6 8z'], ['Next', 'M6 3v10l6-5z'], ['Last', 'M13 3v10M4 3v10l6-5z'],
  ];

  return (
    <div className="flex h-[21px] shrink-0 border-y border-[#828282] bg-[#f7f7f7] text-[15px] leading-none">
      <div className="ml-[2px] flex w-[81px] shrink-0 border-r border-[#828282]">
        {arrows.map(([name, d]) => (
          <button key={name} aria-label={name} className="flex w-[20px] items-center justify-center border border-[#8a8da3] bg-[#a5a8be]">
            <svg width="16" height="16" viewBox="0 0 16 16" className="shrink-0"><path d={d} fill="#84879c" stroke="#84879c" /></svg>
          </button>
        ))}
      </div>
      <button className="w-[75px] pl-1 font-bold">Model</button>
      <button className="w-[90px] border-x border-[#828282] bg-[#d4d4d4]">3D Views</button>
      <button className="w-[144px] border-r border-[#828282] bg-[#d4d4d4] pr-3">Motion Study 1</button>
      <div className="h-full flex-1 bg-[#f9f9f9]" />
    </div>
  );
};

const StatusBar = () => (
  <footer className="flex h-[21px] shrink-0 items-center overflow-hidden bg-[#f7f7f7] pt-1 pl-[2px] pr-px text-[14px]">
    <span>Select a handle to modify parameters</span>
    <div className="ml-auto flex items-center">
      <span className="mr-[36px]">-5.33in</span>
      <span className="mr-[20px]">1.16in</span>
      <span className="mr-[21px]">0in</span>
      <span className="mr-[8px]">Under Defined</span>
      <span className="mr-[7px] h-[20px] w-px bg-[#ccc]" />
      <span className="mr-[4px] h-[20px] w-px bg-[#ccc]" />
      <span className="mr-[7px]">Editing Sketch2</span>
      <span className="mr-[14px] h-[20px] w-px bg-[#ccc]" />
      <span className="mr-[50px] h-[20px] w-px bg-[#ccc]" />
      <span className="mr-[37px] text-[#aaa]">IPS</span>
      <Caret className="mr-[66px] rotate-180 text-[#888]" />
      <button aria-label="Tags"><TagIcon /></button>
    </div>
  </footer>
);

const App = () => (
  <div className="flex h-screen flex-col overflow-hidden bg-[#f7f7f7] font-['Noto_Sans','Open_Sans',sans-serif] text-[13px] text-black">
    <TitleBar />
    <Ribbon />
    <CommandTabs />
    <div className="flex min-h-0 flex-1">
      <PropertyPanel />
      <Viewport />
    </div>
    <BottomTabs />
    <StatusBar />
  </div>
);

export default App;
